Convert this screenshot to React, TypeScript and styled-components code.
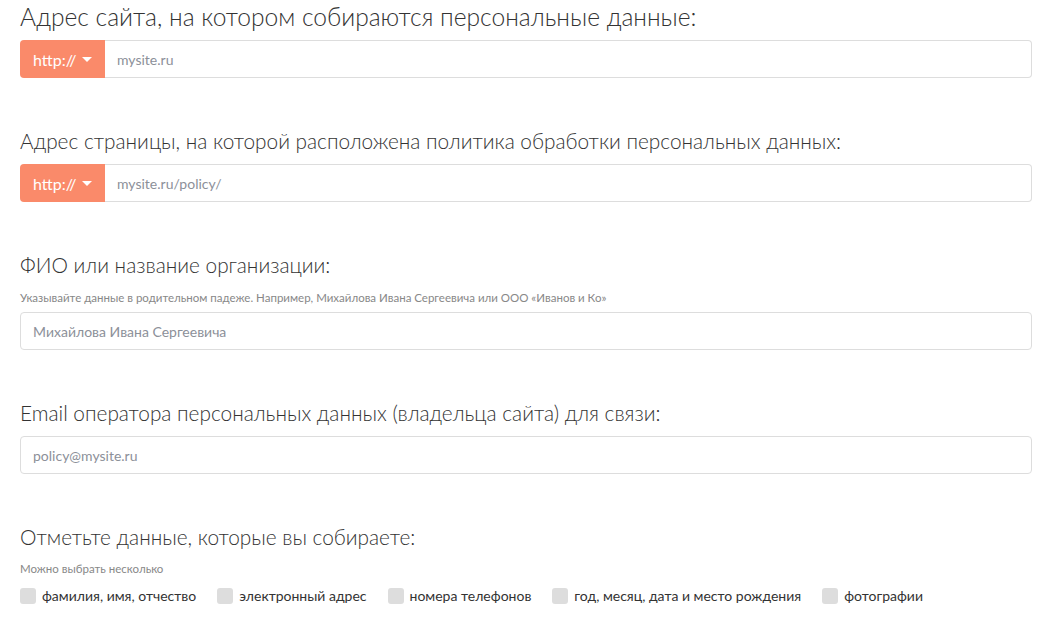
import React from "react";
import styled, { createGlobalStyle } from "styled-components";

const GlobalStyle = createGlobalStyle`
  html, body {
    margin: 0;
    padding: 0;
    background: #fff;
  }
  body {
    font-family: "Lato", "Open Sans", sans-serif;
    color: #333;
  }
`;

const Form = styled.form`
  padding: 2px 8px 0 20px;
`;

const Section = styled.div`
  margin-bottom: 48px;
  &:last-child {
    margin-bottom: 0;
  }
`;

const Title = styled.div<{ $big?: boolean }>`
  font-size: ${(p) => (p.$big ? 24.6 : 20.8)}px;
  line-height: 30px;
  font-weight: 300;
  color: #333;
  margin-bottom: 8px;
`;

const Hint = styled.div<{ $top: number; $bottom: number }>`
  font-size: 11.5px;
  line-height: 16px;
  color: #888;
  margin-top: ${(p) => p.$top - 8}px;
  margin-bottom: ${(p) => p.$bottom}px;
`;

const Group = styled.div`
  display: flex;
  height: 38px;
`;

const Prefix = styled.button`
  display: flex;
  align-items: center;
  gap: 5px;
  width: 85px;
  flex: none;
  padding: 0 0 0 13px;
  border: none;
  border-radius: 4px 0 0 4px;
  background: #fa8a6a;
  color: #fff;
  font-family: inherit;
  font-size: 16px;
  cursor: pointer;
`;

const Caret = styled.span`
  width: 0;
  height: 0;
  border-left: 5px solid transparent;
  border-right: 5px solid transparent;
  border-top: 5px solid #fff;
`;

const Input = styled.input<{ $attached?: boolean }>`
  display: block;
  flex: 1;
  width: 100%;
  min-width: 0;
  box-sizing: border-box;
  height: 38px;
  padding: 0 12px;
  border: 1px solid #ddd;
  border-left-width: ${(p) => (p.$attached ? 0 : 1)}px;
  border-radius: ${(p) => (p.$attached ? "0 4px 4px 0" : "4px")};
  font-family: inherit;
  font-size: 14px;
  color: #333;
  outline: none;
  &::placeholder {
    color: #8c9099;
  }
`;

const Checks = styled.div`
  display: flex;
  gap: 21px;
`;

const Check = styled.label`
  display: flex;
  align-items: center;
  gap: 6px;
  font-size: 14px;
  line-height: 16px;
  color: #333;
  cursor: pointer;
`;

const Box = styled.span`
  width: 16px;
  height: 16px;
  border-radius: 3px;
  background: #ddd;
`;

const UrlField = ({ title, placeholder, big }: { title: string; placeholder: string; big?: boolean }) => (
  <Section>
    <Title $big={big}>{title}</Title>
    <Group>
      <Prefix type="button">
        http:// <Caret />
      </Prefix>
      <Input $attached placeholder={placeholder} />
    </Group>
  </Section>
);

const options = [
  "фамилия, имя, отчество",
  "электронный адрес",
  "номера телефонов",
  "год, месяц, дата и место рождения",
  "фотографии",
];

const App = () => (
  <>
    <GlobalStyle />
    <Form>
      <UrlField big title="Адрес сайта, на котором собираются персональные данные:" placeholder="mysite.ru" />
      <UrlField
        title="Адрес страницы, на которой расположена политика обработки персональных данных:"
        placeholder="mysite.ru/policy/"
      />
      <Section>
        <Title>ФИО или название организации:</Title>
        <Hint $top={18} $bottom={6}>
          Указывайте данные в родительном падеже. Например, Михайлова Ивана Сергеевича или ООО «Иванов и Ко»
        </Hint>
        <Input placeholder="Михайлова Ивана Сергеевича" />
      </Section>
      <Section>
        <Title>Email оператора персональных данных (владельца сайта) для связи:</Title>
        <Input placeholder="policy@mysite.ru" />
      </Section>
      <Section>
        <Title>Отметьте данные, которые вы собираете:</Title>
        <Hint $top={17} $bottom={11}>Можно выбрать несколько</Hint>
        <Checks>
          {options.map((o) => (
            <Check key={o}>
              <Box />
              {o}
            </Check>
          ))}
        </Checks>
      </Section>
    </Form>
  </>
);

export default App;
